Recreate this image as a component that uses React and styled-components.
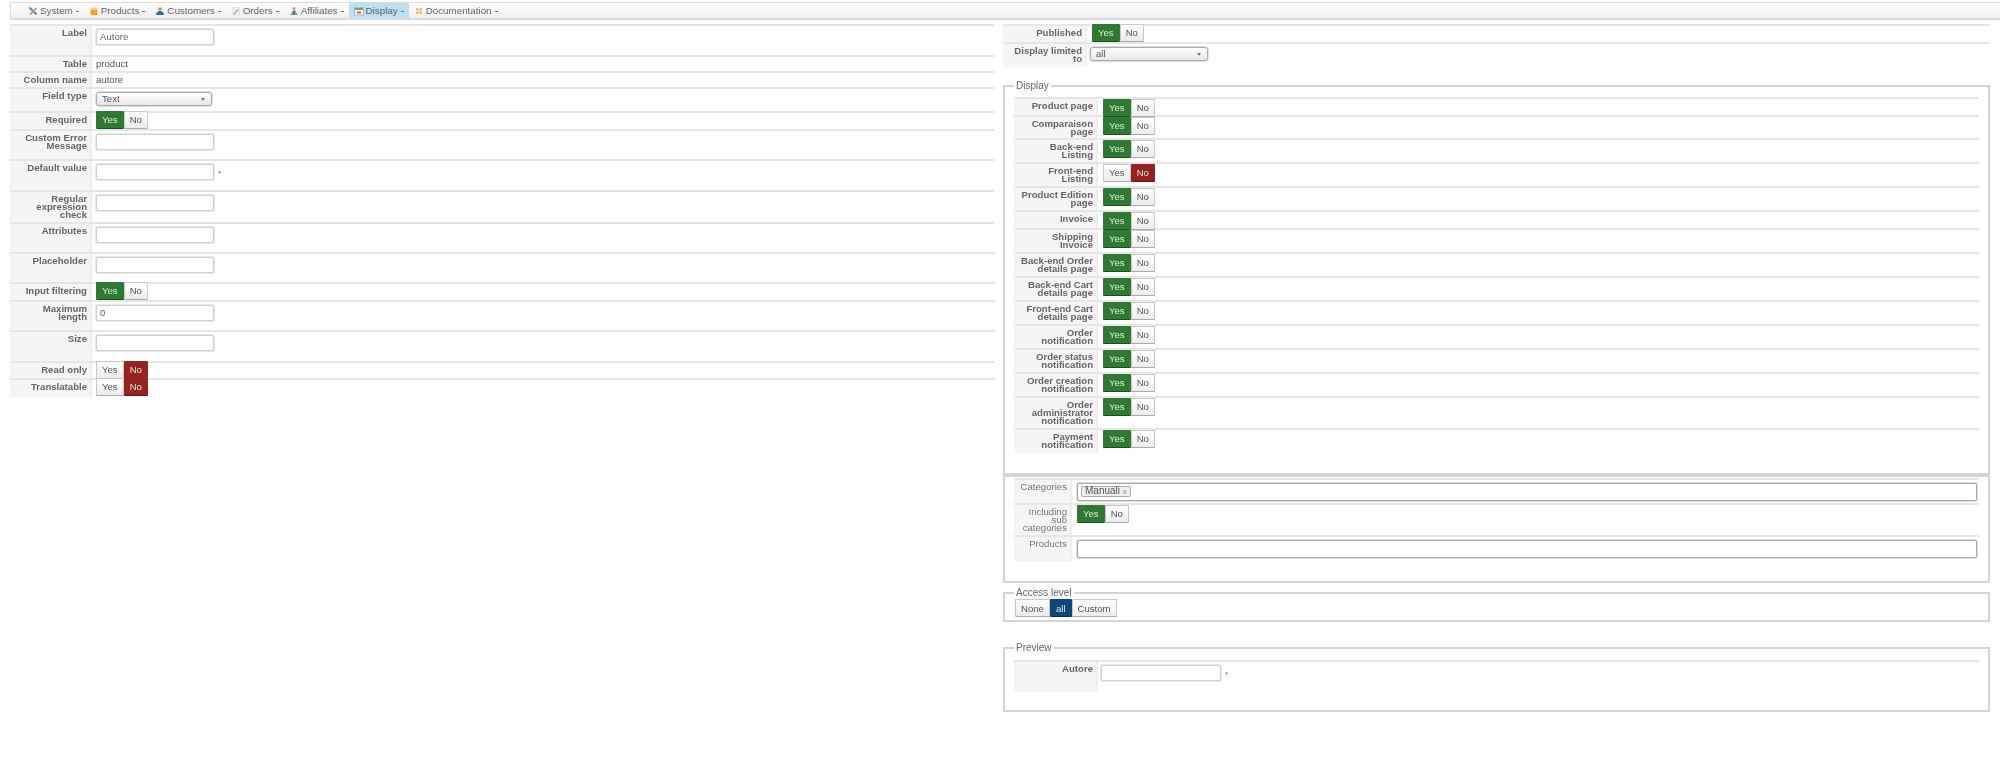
import React from 'react'
import styled, { createGlobalStyle } from 'styled-components'

const GlobalStyle = createGlobalStyle`
  html, body { margin: 0; padding: 0; background: #fff; }
  body { font-family: "Liberation Sans", Arial, sans-serif; font-size: 9.6px; color: #555; }
  #root { filter: blur(0.5px); height: 772px; overflow: hidden; }
`

const Page = styled.div`
  padding: 2px 0 0 10px;
`

const Toolbar = styled.nav`
  display: flex;
  height: 18px;
  box-sizing: border-box;
  padding-left: 12px;
  border: 1px solid #dcdcdc;
  border-bottom-width: 2px;
  border-right: 0;
  background: linear-gradient(#fff, #efefef);
`

const MenuItem = styled.div`
  display: flex;
  align-items: center;
  gap: 2px;
  padding: 0 5px;
  font-size: 9.8px;
  color: #666;
  background: ${p => (p.$active ? '#bfe0f2' : 'transparent')};
`

const Caret = styled.span`
  width: 3px;
  height: 1px;
  margin: 1px 0 0 1px;
  background: #777;
`

const Columns = styled.div`
  display: grid;
  grid-template-columns: 985px 987px;
  gap: 8px;
  margin-top: 4px;
`

const Stack = styled.div`
  display: flex;
  flex-direction: column;
`

const Row = styled.div`
  display: flex;
  height: ${p => p.$h}px;
  box-sizing: border-box;
  border-top: 2px solid #e6e6e6;
`

const Label = styled.div`
  flex: none;
  width: ${p => p.$w}px;
  box-sizing: border-box;
  padding: 3px 3px 0 0;
  border-right: 2px solid #eee;
  background: #f5f5f5;
  text-align: right;
  white-space: pre-line;
  line-height: 8.2px;
  font-weight: ${p => (p.$plain ? 400 : 700)};
  color: ${p => (p.$plain ? '#777' : '#666')};
`

const Value = styled.div`
  display: flex;
  flex: 1;
  align-items: flex-start;
  min-width: 0;
  padding: 3px 0 0 ${p => p.$gap}px;
  line-height: 8.2px;
  color: #555;
`

const Input = styled.div`
  width: ${p => p.$w || 118}px;
  height: 16px;
  box-sizing: border-box;
  padding: 0 3px;
  border: 1px solid #d0d0d0;
  box-shadow: 0 0 0 0.5px #d0d0d0;
  border-radius: 2px;
  background: #fff;
  line-height: 14px;
  color: #666;
`

const Required = styled.span`
  margin: 6px 0 0 4px;
  font-size: 8px;
  color: #666;
`

const Select = styled.div`
  display: flex;
  align-items: center;
  justify-content: space-between;
  width: ${p => p.$w}px;
  height: 14px;
  box-sizing: border-box;
  padding: 0 6px 0 5px;
  border: 1px solid #aaa;
  box-shadow: 0 0 0 0.5px #bbb;
  border-radius: 3px;
  background: linear-gradient(#fff, #e6e6e6);
  color: #555;
`

const SelectArrow = styled.span`
  width: 0;
  height: 0;
  border: 2px solid transparent;
  border-top: 3px solid #777;
  border-bottom: 0;
`

const ButtonGroup = styled.div`
  display: flex;
  flex: none;
  height: 18px;
  margin: ${p => p.$top ?? -3}px 0 0 ${p => p.$left ?? 2}px;
`

const tones = { yes: '#2f7a33', no: '#962320', all: '#0f4677' }

const Choice = styled.div`
  display: flex;
  align-items: center;
  padding: 0 5px;
  box-sizing: border-box;
  border: 1px solid ${p => (p.$tone ? tones[p.$tone] : '#c8c8c8')};
  border-bottom-color: ${p => (p.$tone ? 'rgba(0,0,0,.35)' : '#aaa')};
  border-radius: 1px;
  background: ${p => (p.$tone ? tones[p.$tone] : 'linear-gradient(#fff, #ececec)')};
  color: ${p => (p.$tone ? '#d8e6d8' : '#555')};
  font-size: 9.6px;
`

const Fieldset = styled.fieldset`
  margin: ${p => p.$mt || 0}px 0 0;
  padding: ${p => p.$pt}px 9px ${p => p.$pb}px;
  min-width: 0;
  border: 2px solid #d4d4d4;
`

const Legend = styled.legend`
  padding: 0 2px;
  line-height: 12px;
  font-size: 10px;
  color: #666;
`

const MultiBox = styled.div`
  flex: 1;
  height: 18px;
  box-sizing: border-box;
  margin-right: 2px;
  padding: 2px 3px;
  border: 1px solid #aaa;
  box-shadow: 0 0 0 0.5px #bbb;
  border-radius: 2px;
  background: #fff;
`

const Token = styled.span`
  display: inline-flex;
  align-items: baseline;
  gap: 3px;
  height: 11px;
  box-sizing: border-box;
  padding: 0 3px;
  border: 1px solid #aaa;
  border-radius: 2px;
  background: #eee;
  line-height: 8px;
  font-size: 10px;
  color: #555;

  small {
    font-size: 7px;
    color: #888;
  }
`

const IconSvg = styled.svg`
  flex: none;
  display: block;
  width: 10px;
  height: 10px;
`

const icons = {
  system: (
    <>
      <path d="M1.5 1.5l7 7" stroke="#3b8fc4" strokeWidth="1.8" />
      <path d="M8.5 2L2 8.5" stroke="#e88b2a" strokeWidth="1.6" />
    </>
  ),
  products: (
    <>
      <rect x="2" y="1.5" width="6" height="2" fill="#f9cf70" />
      <rect x="1.5" y="3.5" width="7" height="5.5" fill="#f4a31f" />
    </>
  ),
  customers: (
    <>
      <circle cx="5" cy="3" r="1.8" fill="#d98a3a" />
      <path d="M1 9c0-3 2-4 4-4s4 1 4 4z" fill="#2f6fa8" />
    </>
  ),
  orders: (
    <>
      <rect x="2" y="1.5" width="6.5" height="7.5" fill="#efefef" stroke="#d0d0d0" strokeWidth=".5" />
      <path d="M3 8l4-4.5" stroke="#a9c472" strokeWidth="1.6" />
    </>
  ),
  affiliates: (
    <>
      <circle cx="5" cy="2.5" r="1.5" fill="#e09a3c" />
      <path d="M3.5 4.5h3V9h-3z" fill="#2c7fa8" />
      <path d="M1 9l2.5-3v3zM9 9L6.5 6v3z" fill="#6aa15a" />
    </>
  ),
  display: (
    <>
      <rect x=".5" y="1.5" width="9" height="7.5" fill="#f2f2f2" stroke="#999" strokeWidth=".6" />
      <rect x="1" y="2" width="8" height="2" fill="#6aa87a" />
      <rect x="3" y="5.5" width="4" height="2" fill="#d0604a" />
    </>
  ),
  documentation: (
    <>
      <circle cx="3.3" cy="3.3" r="1.2" fill="#efa83a" />
      <circle cx="6.7" cy="3.3" r="1.2" fill="#efa83a" />
      <circle cx="3.3" cy="6.7" r="1.2" fill="#efa83a" />
      <circle cx="6.7" cy="6.7" r="1.2" fill="#efa83a" />
    </>
  ),
}

const menu = [
  ['system', 'System'],
  ['products', 'Products'],
  ['customers', 'Customers'],
  ['orders', 'Orders'],
  ['affiliates', 'Affiliates'],
  ['display', 'Display'],
  ['documentation', 'Documentation'],
]

function Toggle({ on, top, left }) {
  return (
    <ButtonGroup $top={top} $left={left}>
      <Choice $tone={on ? 'yes' : undefined}>Yes</Choice>
      <Choice $tone={on ? undefined : 'no'}>No</Choice>
    </ButtonGroup>
  )
}

function Field({ h, label, w, gap, plain, children }) {
  return (
    <Row $h={h}>
      <Label $w={w} $plain={plain}>{label}</Label>
      <Value $gap={gap}>{children}</Value>
    </Row>
  )
}

const leftFlush = { top: -5, left: 0 }

const leftRows = [
  [31, 'Label', <Input>Autore</Input>],
  [16, 'Table', 'product'],
  [16, 'Column name', 'autore'],
  [24, 'Field type', <Select $w={116}>Text<SelectArrow /></Select>],
  [18, 'Required', <Toggle on {...leftFlush} />],
  [30, 'Custom Error\nMessage', <Input />],
  [31, 'Default value', <><Input /><Required>*</Required></>],
  [32, 'Regular\nexpression\ncheck', <Input />],
  [30, 'Attributes', <Input />],
  [30, 'Placeholder', <Input />],
  [18, 'Input filtering', <Toggle on {...leftFlush} />],
  [30, 'Maximum\nlength', <Input>0</Input>],
  [31, 'Size', <Input />],
  [17, 'Read only', <Toggle {...leftFlush} />],
  [19, 'Translatable', <Toggle {...leftFlush} />],
]

const displayRows = [
  [18, 'Product page', true],
  [23, 'Comparaison\npage', true],
  [24, 'Back-end\nListing', true],
  [24, 'Front-end\nListing', false],
  [24, 'Product Edition\npage', true],
  [18, 'Invoice', true],
  [24, 'Shipping\nInvoice', true],
  [24, 'Back-end Order\ndetails page', true],
  [24, 'Back-end Cart\ndetails page', true],
  [24, 'Front-end Cart\ndetails page', true],
  [24, 'Order\nnotification', true],
  [24, 'Order status\nnotification', true],
  [24, 'Order creation\nnotification', true],
  [32, 'Order\nadministrator\nnotification', true],
  [25, 'Payment\nnotification', true],
]

export default function App() {
  return (
    <Page>
      <GlobalStyle />
      <Toolbar>
        {menu.map(([icon, text]) => (
          <MenuItem key={icon} $active={icon === 'display'}>
            <IconSvg viewBox="0 0 10 10">{icons[icon]}</IconSvg>
            {text}
            <Caret />
          </MenuItem>
        ))}
      </Toolbar>
      <Columns>
        <Stack>
          {leftRows.map(([h, label, content]) => (
            <Field key={label} h={h} label={label} w={82} gap={4}>{content}</Field>
          ))}
        </Stack>
        <Stack>
          <Field h={18} label="Published" w={84} gap={3}>
            <Toggle on top={-5} left={2} />
          </Field>
          <Field h={25} label={'Display limited\nto'} w={84} gap={3}>
            <Select $w={118}>all<SelectArrow /></Select>
          </Field>

          <Fieldset $mt={13} $pt={5} $pb={20}>
            <Legend>Display</Legend>
            {displayRows.map(([h, label, on]) => (
              <Field key={label} h={h} label={label} w={84} gap={3}>
                <Toggle on={on} />
              </Field>
            ))}
          </Fieldset>

          <Fieldset $pt={1} $pb={19}>
            <Field h={25} label="Categories" w={58} gap={5} plain>
              <MultiBox><Token>Manuali <small>x</small></Token></MultiBox>
            </Field>
            <Field h={32} label={'Including\nsub\ncategories'} w={58} gap={5} plain>
              <Toggle on left={0} />
            </Field>
            <Field h={27} label="Products" w={58} gap={5} plain>
              <MultiBox />
            </Field>
          </Fieldset>

          <Fieldset $mt={4} $pt={0} $pb={3}>
            <Legend>Access level</Legend>
            <ButtonGroup $top={0} $left={1}>
              <Choice>None</Choice>
              <Choice $tone="all">all</Choice>
              <Choice>Custom</Choice>
            </ButtonGroup>
          </Fieldset>

          <Fieldset $mt={20} $pt={6} $pb={18}>
            <Legend>Preview</Legend>
            <Field h={32} label="Autore" w={84} gap={3}>
              <Input $w={120} />
              <Required>*</Required>
            </Field>
          </Fieldset>
        </Stack>
      </Columns>
    </Page>
  )
}
